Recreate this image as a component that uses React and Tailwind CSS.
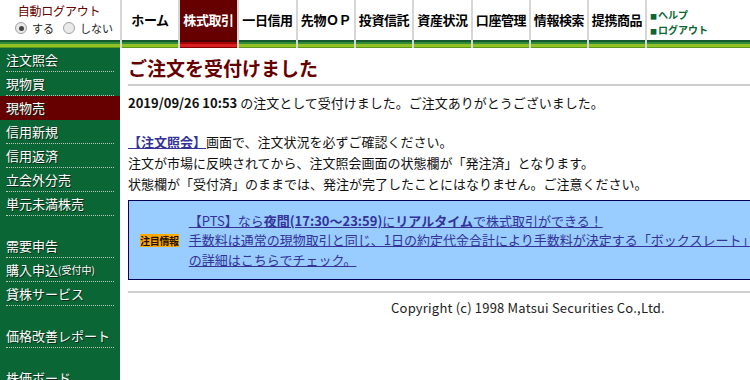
const FONT = '"Noto Sans CJK JP", "Noto Sans", sans-serif';

const TABS = [
  { label: 'ホーム', w: 'w-[58px]' },
  { label: '株式取引', w: 'w-[59px]', active: true },
  { label: '一日信用', w: 'w-[59px]' },
  { label: '先物ＯＰ', w: 'w-[58px]' },
  { label: '投資信託', w: 'w-[58px]' },
  { label: '資産状況', w: 'w-[59px]' },
  { label: '口座管理', w: 'w-[58px]' },
  { label: '情報検索', w: 'w-[58px]' },
  { label: '提携商品', w: 'w-[58px]' },
];

const MENU = [
  [
    { label: '注文照会' },
    { label: '現物買' },
    { label: '現物売', active: true },
    { label: '信用新規' },
    { label: '信用返済' },
    { label: '立会外分売' },
    { label: '単元未満株売' },
  ],
  [
    { label: '需要申告' },
    { label: '購入申込', small: '(受付中)' },
    { label: '貸株サービス' },
  ],
  [{ label: '価格改善レポート' }],
  [{ label: '株価ボード' }],
];

function Stripe({ red }) {
  if (red) {
    return (
      <div className="flex flex-col">
        <div className="h-[2px] bg-[#4a0000]" />
        <div className="h-[2px] bg-[#a80000]" />
        <div className="h-[3px] bg-[#d62020]" />
        <div className="h-px bg-[#8a0000]" />
      </div>
    );
  }
  return (
    <div className="flex flex-col">
      <div className="h-[2px] bg-[#145a2e]" />
      <div className="h-[2px] bg-[#2f8c3a]" />
      <div className="h-[3px] bg-[#93c022]" />
      <div className="h-px bg-[#5b9a1d]" />
    </div>
  );
}

function Radio({ checked }) {
  return (
    <span className="inline-flex w-[12px] h-[12px] rounded-full border border-[#a0a0a0] bg-[#eaeaea] items-center justify-center">
      {checked && <span className="w-[5px] h-[5px] rounded-full bg-[#444]" />}
    </span>
  );
}

function Header() {
  return (
    <div className="flex h-[48px]">
      <div className="w-[122px] flex flex-col border-r-2 border-[#d6d6d6]">
        <div className="h-[40px] flex flex-col items-center pt-[3px]">
          <span className="text-[12px] leading-[15px] text-[#660000] tracking-[-0.2px] ml-[-2px]">自動ログアウト</span>
          <div className="flex items-center gap-[5px] mt-[3px] text-[11px] leading-[14px] text-[#222] ml-[8px]">
            <Radio checked />
            <span className="mr-[4px]">する</span>
            <Radio />
            <span>しない</span>
          </div>
        </div>
        <Stripe />
      </div>
      {TABS.map((t) => (
        <div key={t.label} className={`${t.w} flex flex-col border-r-2 border-[#d6d6d6]`}>
          <div
            className={`h-[40px] flex items-center justify-center text-[13px] font-bold tracking-[-0.4px] ${
              t.active ? 'bg-[#660000] text-white' : 'text-black'
            }`}
          >
            {t.label}
          </div>
          <Stripe red={t.active} />
        </div>
      ))}
      <div className="flex-1 flex flex-col">
        <div className="h-[40px] flex flex-col pl-[3px] pt-[8px] text-[10px] leading-[13px] font-bold text-[#0b6633]">
          <span><span className="text-[7px] mr-px">■</span>ヘルプ</span>
          <span><span className="text-[7px] mr-px">■</span>ログアウト</span>
        </div>
        <Stripe />
      </div>
    </div>
  );
}

function Sidebar() {
  return (
    <div className="w-[120px] shrink-0 bg-[#0a6634] flex flex-col gap-[18px] overflow-hidden">
      {MENU.map((group, gi) => (
        <div key={gi} className="flex flex-col">
          {group.map((item) => (
            <div
              key={item.label}
              className={`h-[24px] flex items-center px-[6px] ${item.active ? 'bg-[#660000]' : ''}`}
            >
              <div
                className={`w-full h-full flex items-center text-[13px] text-white [text-shadow:1px_1px_0_#0f2a18] ${
                  item.active ? '' : 'border-b border-dotted border-[#b8c8bc]'
                }`}
              >
                {item.label}
                {item.small && <span className="text-[10px]">{item.small}</span>}
              </div>
            </div>
          ))}
        </div>
      ))}
    </div>
  );
}

function Main() {
  return (
    <div className="w-[808px] shrink-0 pl-[8px] text-[13px] text-[#111]">
      <h1 className="text-[19px] font-bold text-[#660000] leading-[24px] pt-[8px] pb-[4px] border-b-2 border-[#cfcfcf]">
        ご注文を受付けました
      </h1>
      <p className="mt-[6px] leading-[21px]">
        <span className="font-bold">2019/09/26 10:53</span> の注文として受付けました。ご注文ありがとうございました。
      </p>
      <div className="mt-[18px] leading-[21px]">
        <p>
          <a className="text-[#333399] font-bold underline"> 【注文照会】</a>画面で、注文状況を必ずご確認ください。
        </p>
        <p>注文が市場に反映されてから、注文照会画面の状態欄が「発注済」となります。</p>
        <p>状態欄が「受付済」のままでは、発注が完了したことにはなりません。ご注意ください。</p>
      </div>
      <div className="mt-[6px] h-[80px] border border-[#000066] bg-[#99ccff] flex items-center pl-[11px]">
        <span className="bg-[#ffaa00] text-[10px] font-bold leading-[13px] text-[#221100] tracking-[-0.3px]">注目情報</span>
        <div className="ml-[10px] text-[13px] leading-[19.5px] text-[#333399] whitespace-nowrap">
          <a className="underline">
            {' '}【PTS】なら<b>夜間(17:30～23:59)</b>に<b>リアルタイム</b>で株式取引ができる！
          </a>
          <br />
          <a className="underline">手数料は通常の現物取引と同じ、1日の約定代金合計により手数料が決定する「ボックスレート」で</a>
          <br />
          <a className="underline">の詳細はこちらでチェック。</a>
        </div>
      </div>
      <div className="mt-[11px] border-t-2 border-[#cfcfcf] text-center text-[13px] text-[#222] pt-[5px] tracking-[0.2px]">
        Copyright (c) 1998 Matsui Securities Co.,Ltd.
      </div>
    </div>
  );
}

export default function App() {
  return (
    <div className="w-[750px] h-[380px] overflow-hidden bg-white flex flex-col" style={{ fontFamily: FONT }}>
      <Header />
      <div className="flex flex-1 min-h-0">
        <Sidebar />
        <Main />
      </div>
    </div>
  );
}
